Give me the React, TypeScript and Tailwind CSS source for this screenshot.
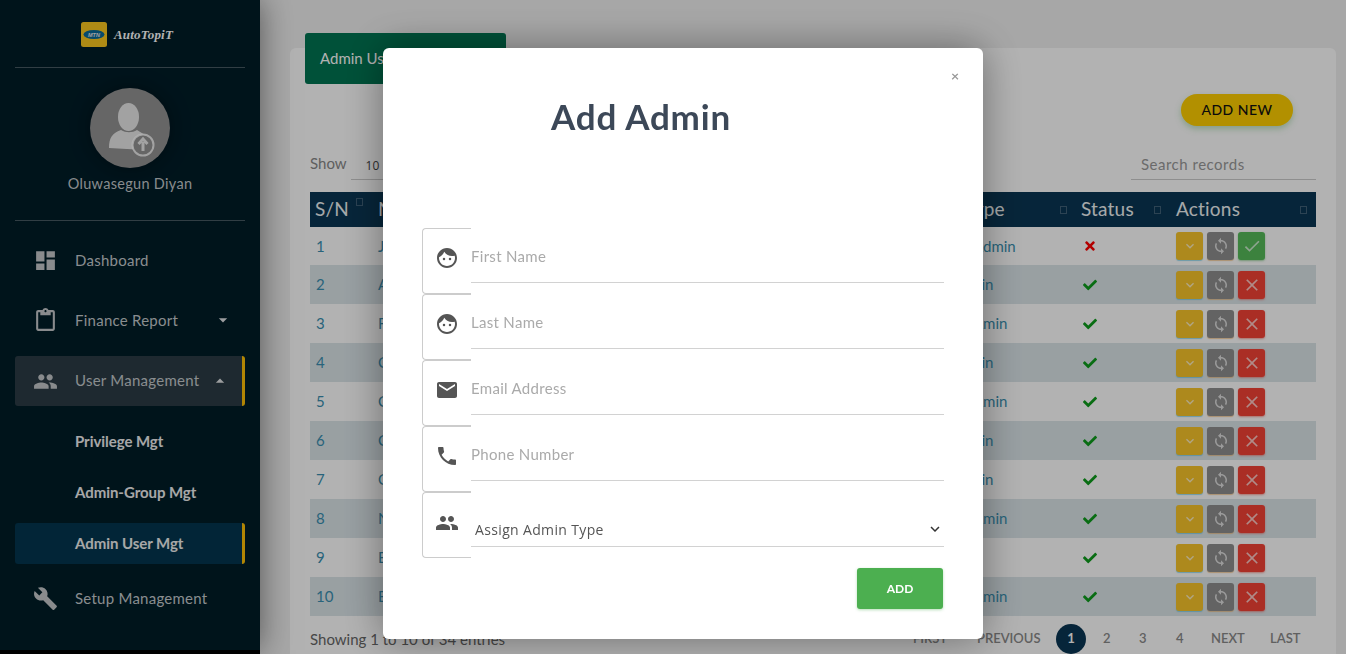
import { ReactNode } from 'react';
import { IconType } from 'react-icons';
import {
    MdDashboard,
    MdContentPaste,
    MdPeople,
    MdBuild,
    MdArrowDropDown,
    MdArrowDropUp,
    MdExpandMore,
    MdSync,
    MdCheck,
    MdClose,
    MdFace,
    MdEmail,
    MdPhone,
} from 'react-icons/md';
import { FaCheck, FaTimes } from 'react-icons/fa';

const rows = [
    { id: 1, name: 'James', type: 'Admin', active: false },
    { id: 2, name: 'Ade', type: 'Fin', active: true },
    { id: 3, name: 'Femi', type: 'Amin', active: true },
    { id: 4, name: 'Chidi', type: 'Fin', active: true },
    { id: 5, name: 'Chika', type: 'Amin', active: true },
    { id: 6, name: 'Chuka', type: 'Fin', active: true },
    { id: 7, name: 'Obi', type: 'Fin', active: true },
    { id: 8, name: 'Ngozi', type: 'Amin', active: true },
    { id: 9, name: 'Emeka', type: '', active: true },
    { id: 10, name: 'Bola', type: 'Amin', active: true },
];

function NavItem({
    icon: Icon,
    label,
    caret,
    active,
}: {
    icon: IconType;
    label: string;
    caret?: 'up' | 'down';
    active?: boolean;
}) {
    return (
        <div
            className={`flex h-[50px] items-center rounded-[3px] pl-[18px] text-[#c5cacd] ${active ? 'border-r-[3px] border-[#ffc107] bg-[#2c3c46]' : ''}`}
        >
            <Icon className="w-[25px] h-[25px] shrink-0 text-[#c4c8ca]" />
            <span className={`ml-[17px] text-[15px] tracking-[0.25px] ${active ? '-mt-[2px]' : ''}`}>{label}</span>
            {caret === 'down' && <MdArrowDropDown className="w-5 h-5 ml-auto mr-3 text-[#e0e3e5]" />}
            {caret === 'up' && <MdArrowDropUp className="w-5 h-5 ml-auto mr-3 text-[#e0e3e5]" />}
        </div>
    );
}

function SubItem({ label, active }: { label: string; active?: boolean }) {
    return (
        <div
            className={`flex h-[41px] items-center rounded-[3px] pl-[60px] text-[15px] font-bold tracking-[-0.05px] text-[#f0f0f0] ${active ? 'border-r-[3px] border-[#ffc107] bg-[#03364f]' : ''}`}
        >
            {label}
        </div>
    );
}

function Sidebar() {
    return (
        <aside className="relative z-10 w-[260px] h-[654px] shrink-0 bg-black">
            <div className="h-[650px] bg-[#001d28] px-[15px] shadow-[0_0_30px_rgba(0,0,0,0.5)]">
                <div className="flex h-[68px] items-start justify-center border-b border-[#475a62] pt-[22px] pr-[6px]">
                    <svg viewBox="0 0 26 25" className="w-[26px] h-[25px]">
                        <rect width="26" height="25" rx="2.5" fill="#fbc81f" />
                        <ellipse cx="13" cy="12.500" rx="10.500" ry="4.500" fill="#0a6a9a" />
                        <text x="13" y="14.500" textAnchor="middle" fontSize="5.500" fontWeight="700" fontStyle="italic" fill="#e8e8e8" fontFamily="Liberation Sans, sans-serif">
                            MTN
                        </text>
                    </svg>
                    <span className="ml-[7px] mt-[3px] font-['Liberation_Serif',serif] text-[13px] font-bold italic tracking-[0.2px] text-[#fff]">
                        AutoTopiT
                    </span>
                </div>
                <div className="flex h-[153px] flex-col items-center border-b border-[#475a62] pt-5">
                    <div className="flex h-20 w-20 items-center justify-center rounded-full bg-[#929292] shadow-[0_0_20px_rgba(0,0,0,0.4)]">
                        <svg viewBox="0 0 80 80" className="w-20 h-20">
                            <ellipse cx="38.500" cy="29" rx="10.500" ry="14" fill="#fff" fillOpacity="0.8" />
                            <path d="M19 60c0-10 3-15 12-18 5 3 11 3 16 0l8 5v15z" fill="#fff" fillOpacity="0.8" />
                            <circle cx="53" cy="57" r="10.500" fill="#929292" stroke="#fff" strokeOpacity="0.8" strokeWidth="2" />
                            <path d="M53 63v-9m-4.500 2l4.500-5 4.500 5" fill="none" stroke="#fff" strokeOpacity="0.8" strokeWidth="3" />
                        </svg>
                    </div>
                    <span className="mt-[5px] text-[14.500px] tracking-[0.3px] text-[#c3c8cb]">Oluwasegun Diyan</span>
                </div>
                <nav className="mt-[14px] flex flex-col">
                    <NavItem icon={MdDashboard} label="Dashboard" />
                    <div className="mt-[10px]">
                        <NavItem icon={MdContentPaste} label="Finance Report" caret="down" />
                    </div>
                    <div className="mt-[11px]">
                        <NavItem icon={MdPeople} label="User Management" caret="up" active />
                    </div>
                    <div className="mt-[15px] flex flex-col gap-[10px]">
                        <SubItem label="Privilege Mgt" />
                        <SubItem label="Admin-Group Mgt" />
                        <SubItem label="Admin User Mgt" active />
                    </div>
                    <div className="mt-[9px]">
                        <NavItem icon={MdBuild} label="Setup Management" />
                    </div>
                </nav>
            </div>
        </aside>
    );
}

function ActionButton({ className, children }: { className: string; children: ReactNode }) {
    return (
        <button className={`flex h-[28px] w-[27px] items-center justify-center rounded-[3px] text-white/70 ${className}`}>
            {children}
        </button>
    );
}

function SortMark({ className }: { className?: string }) {
    return <span className={`h-2 w-[7px] shrink-0 border border-[#3f6077] ${className ?? ''}`} />;
}

function AdminTable() {
    return (
        <div>
            <div className="grid h-[35px] grid-cols-[62px_595px_109px_95px_145px] items-center bg-[#0a3653] text-[19px] tracking-[0.2px] text-[#eef2f4]">
                <div className="flex items-center justify-between pl-[5px] pr-[9px]">
                    S/N
                    <SortMark className="-mt-[16px]" />
                </div>
                <div className="flex items-center justify-between pl-[6px] pr-[9px]">
                    Name
                    <SortMark />
                </div>
                <div className="flex items-center justify-between pr-[9px]">
                    <span className="-ml-[3px]">Type</span>
                    <SortMark />
                </div>
                <div className="flex items-center justify-between pl-[5px] pr-[10px]">
                    Status
                    <SortMark />
                </div>
                <div className="flex items-center justify-between pl-[5px] pr-[9px]">
                    Actions
                    <SortMark />
                </div>
            </div>
            {rows.map((row) => (
                <div
                    key={row.id}
                    className={`grid grid-cols-[62px_595px_109px_95px_145px] items-center text-[15px] text-[#3a8fb0] ${row.id === 1 ? 'h-[38px]' : 'h-[39px]'} ${row.id % 2 === 0 ? 'bg-[#dbe5e9]' : 'bg-white'}`}
                >
                    <div className="pl-[6px]">{row.id}</div>
                    <div className="pl-[6px]">{row.name}</div>
                    <div className="pl-[6px]">{row.type}</div>
                    <div className="pl-[7px]">
                        {row.active ? (
                            <FaCheck className="w-[14px] h-[14px] text-[#0e9d1c]" />
                        ) : (
                            <FaTimes className="w-[14px] h-[14px] text-[#ff0000]" />
                        )}
                    </div>
                    <div className="flex gap-1 pl-[5px]">
                        <ActionButton className="bg-[#f8c42a] shadow-[0_1px_1px_rgba(88,199,234,0.6)]">
                            <MdExpandMore className="w-4 h-4" />
                        </ActionButton>
                        <ActionButton className="bg-[#8e8e8e] shadow-[0_1px_1px_rgba(240,176,96,0.6)]">
                            <MdSync className="w-[18px] h-[18px]" />
                        </ActionButton>
                        {row.active ? (
                            <ActionButton className="bg-[#f44336] shadow-[0_1px_2px_rgba(244,67,54,0.5)]">
                                <MdClose className="w-5 h-5" />
                            </ActionButton>
                        ) : (
                            <ActionButton className="bg-[#56bb59] shadow-[0_1px_2px_rgba(76,175,80,0.5)]">
                                <MdCheck className="w-5 h-5" />
                            </ActionButton>
                        )}
                    </div>
                </div>
            ))}
        </div>
    );
}

function Pagination() {
    return (
        <div className="flex items-center text-[13px] font-semibold text-[#8a8a8a]">
            <span className="w-[64px]">FIRST</span>
            <span className="w-[79px]">PREVIOUS</span>
            <span className="flex h-[30px] w-[30px] items-center justify-center rounded-full bg-[#0a3653] font-bold text-white">1</span>
            <span className="w-[36px] pl-[16px] ml-[1px]">2</span>
            <span className="w-[36px] pl-[16px]">3</span>
            <span className="w-[36px] pl-[17px]">4</span>
            <span className="w-[60px] pl-[16px]">NEXT</span>
            <span className="w-[45px] pl-[15px]">LAST</span>
        </div>
    );
}

function Main() {
    return (
        <main className="min-w-0 flex-1 px-[30px] pr-[10px] pt-[48px] bg-[#f0f0f0]">
            <div className="flow-root h-[700px] rounded-t-[6px] bg-white px-5">
                <div className="-ml-[5px] -mt-[15px] flex h-[51px] w-[201px] items-center rounded-[3px] bg-[#007552] pb-[1px] pl-[15px] text-[15px] text-white">
                    Admin User Management
                </div>
                <div className="mt-[10px] flex justify-end pr-[23px]">
                    <button className="h-8 w-[112px] rounded-full bg-[#ffcf00] pb-[2px] text-[14px] font-medium tracking-[0.5px] text-[#111] shadow-[0_3px_6px_rgba(76,175,80,0.35)]">
                        ADD NEW
                    </button>
                </div>
                <div className="mt-[24px] flex items-start justify-between">
                    <div className="flex items-center text-[15px] text-[#888]">
                        <span className="-mt-[3px]">Show</span>
                        <span className="ml-1 h-[30px] w-[120px] border-b border-[#ccc] pl-[15px] pt-[7px] font-['Open_Sans',sans-serif] text-[12px] text-[#444]">
                            10
                        </span>
                    </div>
                    <div className="h-[30px] w-[185px] border-b border-[#ccc] pl-[10px] pt-[3px] text-[15px] tracking-[0.5px] text-[#999]">
                        Search records
                    </div>
                </div>
                <div className="mt-3">
                    <AdminTable />
                </div>
                <div className="mt-[8px] flex items-center justify-between pr-4">
                    <span className="text-[15px] text-[#666]">Showing 1 to 10 of 34 entries</span>
                    <Pagination />
                </div>
            </div>
        </main>
    );
}

function FormRow({ icon: Icon, children, iconClass }: { icon: IconType; children: ReactNode; iconClass?: string }) {
    return (
        <div className="flex h-[66px]">
            <div className={`flex w-[49px] shrink-0 justify-center rounded-l-[4px] border-y border-l border-[#ccc] ${iconClass ?? 'items-center pb-[6px]'}`}>
                <Icon className="w-6 h-6 text-[#555]" />
            </div>
            <div className="mb-[11px] flex flex-1 items-center border-b border-[#d2d2d2]">{children}</div>
        </div>
    );
}

function AddAdminModal() {
    return (
        <div className="fixed inset-0 z-20 bg-black/30">
            <div className="absolute left-[383px] top-[48px] h-[591px] w-[600px] rounded-[6px] bg-white px-[39px] shadow-[0_0_40px_rgba(0,0,0,0.4)]">
                <span className="absolute right-[24px] top-[17px] text-[14px] font-bold text-[#999]">×</span>
                <h2 className="pl-[129px] pt-[45px] text-[35px] leading-[46px] font-bold tracking-[0.8px] text-[#3c4858]">
                    Add Admin
                </h2>
                <div className="mt-[89px]">
                    {['First Name', 'Last Name', 'Email Address', 'Phone Number'].map((label, i) => (
                        <FormRow key={label} icon={i < 2 ? MdFace : i === 2 ? MdEmail : MdPhone}>
                            <span className="mt-[3px] text-[15px] tracking-[0.3px] text-[#aaa]">{label}</span>
                        </FormRow>
                    ))}
                    <FormRow icon={MdPeople} iconClass="items-start pt-[18px]">
                        <div className="flex w-full items-center justify-between pt-5 pl-1">
                            <span className="font-['Open_Sans',sans-serif] text-[14px] tracking-[0.35px] text-[#555]">
                                Assign Admin Type
                            </span>
                            <MdExpandMore className="w-[18px] h-[18px] text-[#333]" />
                        </div>
                    </FormRow>
                </div>
                <div className="mt-[10px] flex justify-end pr-[1px]">
                    <button className="h-[41px] w-[86px] rounded-[3px] bg-[#4caf50] text-[12px] font-bold text-white shadow-[0_1px_3px_rgba(76,175,80,0.4)]">
                        ADD
                    </button>
                </div>
            </div>
        </div>
    );
}

export default function App() {
    return (
        <div className="relative flex h-[654px] w-[1346px] overflow-hidden font-['Lato',sans-serif]">
            <Sidebar />
            <Main />
            <AddAdminModal />
        </div>
    );
}
